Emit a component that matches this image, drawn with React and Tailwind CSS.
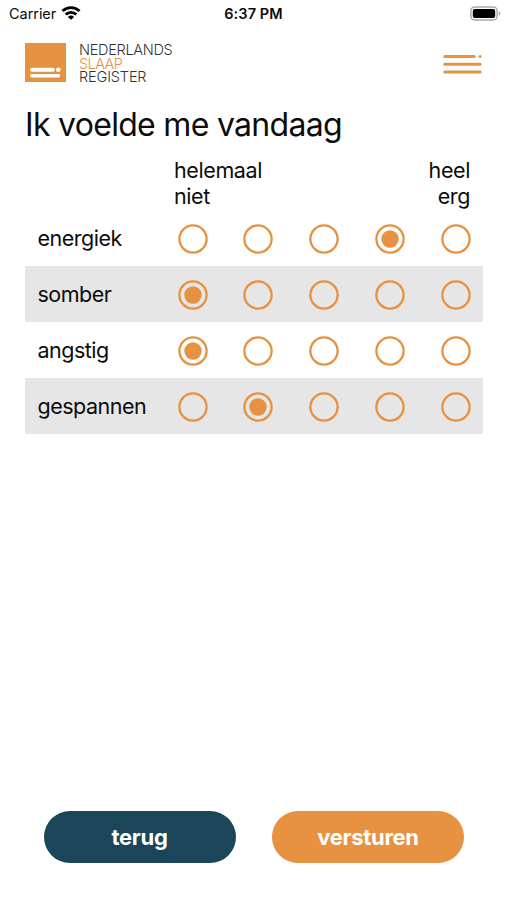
import React, { useState } from 'react'

const questions = [
  { label: 'energiek', value: 3 },
  { label: 'somber', value: 0 },
  { label: 'angstig', value: 0 },
  { label: 'gespannen', value: 1 },
]

// Phone status bar
const StatusBar = () => (
  <div className="grid h-[27px] grid-cols-3 items-center pl-[9px] pr-[6px] text-[14.5px] leading-none">
    <div className="flex items-center gap-[5px] pt-px">
      <span className="tracking-[-0.05px]">Carrier</span>
      <svg className="-mt-[2px]" width="20" height="14" viewBox="0 0 20 14" fill="none" stroke="#000" strokeWidth="2.9">
        <path d="M1.5 5a12.3 12.3 0 0 1 17 0" />
        <path d="M4.7 8.5a7.7 7.7 0 0 1 10.6 0" />
        <path d="M10 13.8 6.9 10.9a4.4 4.4 0 0 1 6.2 0Z" fill="#000" stroke="none" />
      </svg>
    </div>
    <span className="-ml-[3px] pt-px text-center font-semibold tracking-[0.1px]">6:37 PM</span>
    <svg className="justify-self-end" width="31" height="15" viewBox="0 0 31 15">
      <rect x="0.9" y="0.9" width="26.2" height="13.2" rx="4" fill="#fff" stroke="#a9a9a9" strokeWidth="1.5" />
      <rect x="2.8" y="2.9" width="22.4" height="9.2" rx="2" fill="#000" />
      <path d="M28.7 5.3c2.2.8 2.2 3.6 0 4.4Z" fill="#a9a9a9" />
    </svg>
  </div>
)

const Logo = () => (
  <div className="flex items-start">
    <svg width="41" height="39" viewBox="0 0 41 39">
      <rect width="41" height="39" fill="#e69240" />
      <rect x="5.2" y="24.7" width="24.6" height="4" rx="2" fill="#fff" />
      <circle cx="33.3" cy="26.7" r="2.3" fill="#fff" />
      <rect x="5.2" y="30.9" width="30" height="3.6" rx="1.8" fill="#fff" />
    </svg>
    <div className="ml-[13px] flex flex-col text-[14.5px] font-light leading-[13.5px] text-[#333]">
      <span className="tracking-[-0.3px]">NEDERLANDS</span>
      <span className="tracking-[-0.6px] text-[#e69240]">SLAAP</span>
      <span className="tracking-[-0.15px]">REGISTER</span>
    </div>
  </div>
)

const MenuButton = () => (
  <button aria-label="Menu" className="mt-[11px]">
    <svg width="39" height="21" viewBox="0 0 39 21" fill="none" stroke="#e69240" strokeWidth="3" strokeLinecap="round">
      <path d="M1.8 2.4H31.2M37.1 2.4h.01M1.8 10.2H37.2M1.8 17.9H37.2" />
    </svg>
  </button>
)

const Radio = ({ checked, onClick }) => (
  <button role="radio" aria-checked={checked} onClick={onClick}>
    <svg width="30" height="30" viewBox="0 0 30 30">
      <circle cx="15" cy="15" r="13.6" fill="none" stroke="#e69240" strokeWidth="2.3" />
      {checked && <circle cx="15" cy="15" r="8.7" fill="#e69240" />}
    </svg>
  </button>
)

export default function App() {
  const [answers, setAnswers] = useState(questions.map((q) => q.value))

  const select = (row, value) =>
    setAnswers(answers.map((a, i) => (i === row ? value : a)))

  return (
    <div className="flex h-screen w-full flex-col bg-white font-[Inter,'Liberation_Sans',sans-serif] text-[#0c0c0c]">
      <StatusBar />
      <header className="flex h-[76px] items-start justify-between pl-[25px] pr-[25px] pt-4">
        <Logo />
        <MenuButton />
      </header>

      <main className="flex-1 pl-[25px] pr-[24.5px]">
        <h1 className="h-[54px] text-[32px] leading-[44px] tracking-[-0.7px]">Ik voelde me vandaag</h1>
        <div className="flex h-[52px] justify-between pl-[149px] pr-[12.5px] text-[21.5px] leading-[26px] tracking-[-0.4px]">
          <div>helemaal<br />niet</div>
          <div className="text-right">heel<br />erg</div>
        </div>
        <div className="pt-[0.7px]">
          {questions.map((q, row) => (
            <div key={q.label} className="flex h-[56px] items-center pl-[12.5px] pr-[12px] even:bg-[#e6e6e6]">
              <span className="w-[140px] text-[21.5px] tracking-[-0.5px]">{q.label}</span>
              <div role="radiogroup" aria-label={q.label} className="flex flex-1 justify-between pt-[2px]">
                {[0, 1, 2, 3, 4].map((value) => (
                  <Radio key={value} checked={answers[row] === value} onClick={() => select(row, value)} />
                ))}
              </div>
            </div>
          ))}
        </div>
      </main>

      <footer className="flex justify-between pb-[37px] pl-[43.5px] pr-[43px] text-[22px] font-bold tracking-[-0.3px] text-white">
        <button className="h-[52px] w-[192px] rounded-full bg-[#1b4559]">terug</button>
        <button className="h-[52px] w-[192px] rounded-full bg-[#e69240]">versturen</button>
      </footer>
    </div>
  )
}
